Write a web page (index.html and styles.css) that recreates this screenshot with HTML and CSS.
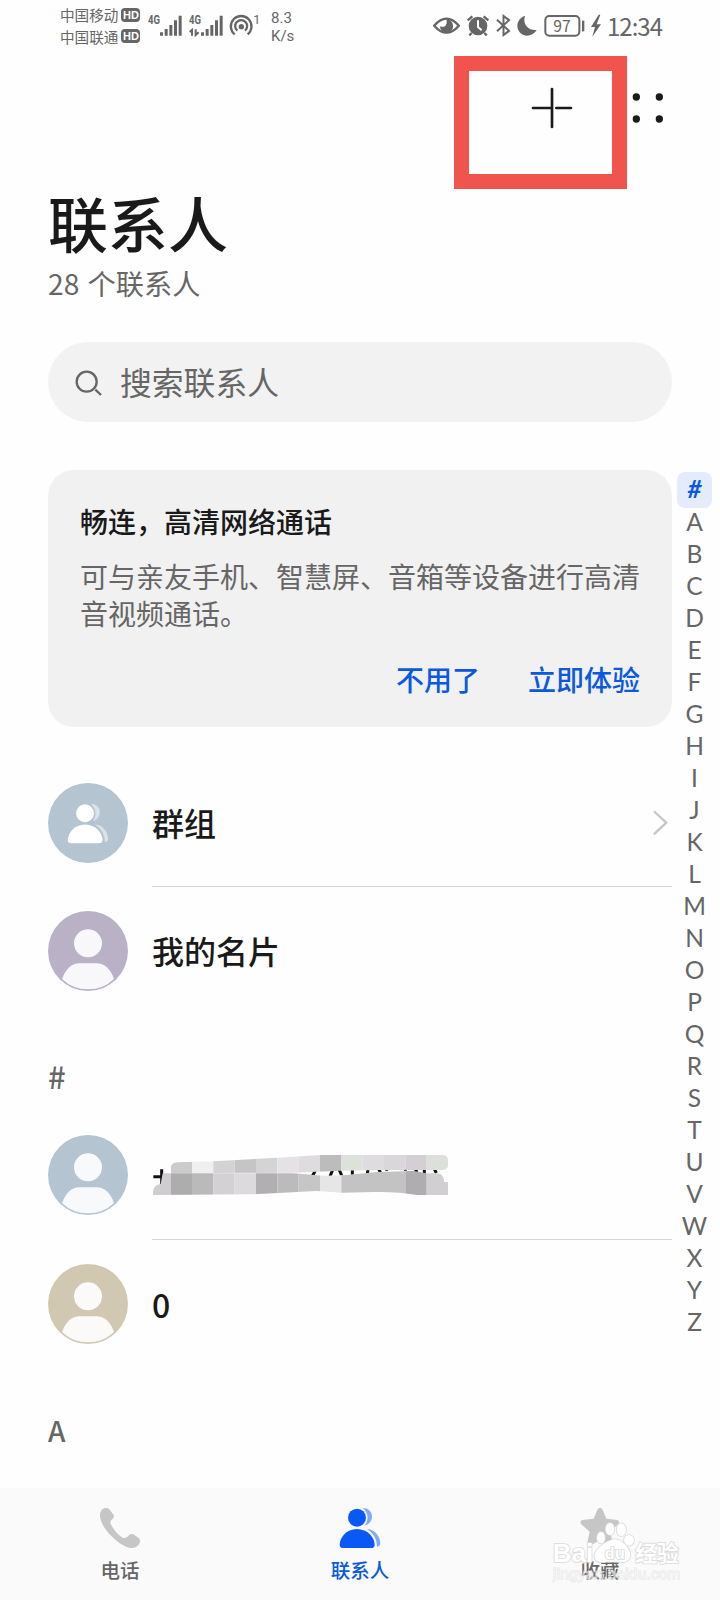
FILE: index.html
```html
<!DOCTYPE html>
<html lang="zh-CN">
<head>
    <meta charset="UTF-8">
    <meta name="viewport" content="width=device-width, initial-scale=1.0">
    <title>联系人</title>
    <link rel="stylesheet" href="styles.css">
</head>
<body>
    <!-- shared avatar shape -->
    <svg class="defs" width="0" height="0">
        <symbol id="person" viewBox="24 422 240 240">
            <circle cx="144" cy="519" r="42"/>
            <path d="M66 626 Q84 579 118 579 H170 Q205 579 222 626 Q190 657 144 657 Q98 657 66 626Z"/>
        </symbol>
        <symbol id="people" viewBox="838 112 126 124">
            <path opacity=".5" d="M909 114 C945 114 945 160 916 166 C928 148 926 128 909 114Z"/>
            <path opacity=".5" d="M922 177 C950 179 962 204 962 220 Q962 230 952 230 Q952 195 922 177Z"/>
            <circle cx="892" cy="143" r="27"/>
            <path d="M892 177 C924 177 945 203 945 224 Q945 234 934 234 H851 Q840 234 840 224 C840 203 860 177 892 177Z"/>
        </symbol>
    </svg>

    <div class="status">
        <div class="carriers">
            <div>中国移动<b>HD</b></div>
            <div>中国联通<b>HD</b></div>
        </div>
        <svg class="sig1" width="35" height="25" viewBox="294 40 105 75">
            <text class="net" x="294" y="73" textLength="36" lengthAdjust="spacingAndGlyphs">4G</text>
            <path d="M330 98h9v10h-9zM344 88h9v20h-9zM358 76h9v32h-9zM372 62h9v46h-9zM386 48h9v60h-9z"/>
        </svg>
        <svg class="sig2" width="35" height="25" viewBox="416 40 105 75">
            <text class="net" x="416" y="73" textLength="36" lengthAdjust="spacingAndGlyphs">4G</text>
            <path d="M452 98h9v10h-9zM466 88h9v20h-9zM480 76h9v32h-9zM494 62h9v46h-9zM508 48h9v60h-9z"/>
            <path d="M425 108V91l-7 6M436 89v17l9-8" fill="none" stroke="#666" stroke-width="6"/>
        </svg>
        <svg class="hotspot" width="33" height="25" viewBox="538 40 99 75">
            <g fill="none" stroke="#666" stroke-width="7">
                <path d="M555 104A31 31 0 1 1 594 104"/>
                <path d="M563 93A18 18 0 1 1 586 93"/>
            </g>
            <circle cx="575" cy="81" r="8"/>
            <text class="one" x="611" y="74">1</text>
        </svg>
        <div class="speed">8.3<br>K/s</div>

        <div class="status-right">
            <svg width="27" height="25" viewBox="38 40 80 75">
                <path d="M41 78Q78 36 115 78Q78 120 41 78Z" fill="none" stroke="#666" stroke-width="7"/>
                <path d="M78 59A20 20 0 1 1 58 80Q68 84 75 78Q81 70 78 59Z"/>
            </svg>
            <svg width="24" height="25" viewBox="137 40 70 75">
                <circle cx="172" cy="79" r="28"/>
                <path d="M141 62l14-12M203 62l-14-12M153 100l-7 7M191 100l7 7" stroke="#666" stroke-width="7"/>
                <path d="M172 62v20l11 10" fill="none" stroke="#fff" stroke-width="6"/>
            </svg>
            <svg width="15" height="25" viewBox="226 40 46 75">
                <path d="M229 60L266 94L249 107V48L266 61L229 95" fill="none" stroke="#666" stroke-width="6"/>
            </svg>
            <svg width="20" height="25" viewBox="292 40 60 75">
                <path d="M316 48C308 74 325 94 351 91C338 113 306 114 296 92C288 73 297 55 316 48Z"/>
            </svg>
            <svg class="battery" width="41" height="25" viewBox="373 40 123 75">
                <rect x="377" y="49" width="102" height="59" rx="12" fill="none" stroke="#666" stroke-width="6"/>
                <path d="M487 63h7v32h-7z"/>
                <text x="427" y="96" text-anchor="middle">97</text>
            </svg>
            <svg width="10" height="25" viewBox="511 40 30 75">
                <path d="M534 45L511 82H523L515 111L541 74H528L539 45Z"/>
            </svg>
            <div class="time">12:34</div>
        </div>
    </div>

    <div class="toolbar">
        <svg class="plus" width="42" height="42" viewBox="273 141 126 126">
            <path d="M336 147v114M279 204h57M349 204h44" stroke="#1a1a1a" stroke-width="8" stroke-linecap="round"/>
        </svg>
        <svg class="dots" width="32" height="32" viewBox="576 154 96 96">
            <circle cx="589" cy="169" r="11"/><circle cx="658" cy="169" r="11"/>
            <circle cx="589" cy="235" r="11"/><circle cx="658" cy="235" r="11"/>
        </svg>
        <div class="highlight"></div>
    </div>

    <div class="header">
        <h1>联系人</h1>
        <p>28 个联系人</p>
        <div class="search">
            <svg width="28" height="28" viewBox="135 566 84 84">
                <circle cx="170" cy="601" r="30"/>
                <path d="M196 625l17 16"/>
            </svg>
            <span>搜索联系人</span>
        </div>
    </div>

    <div class="main">
        <div class="content">
            <div class="card">
                <h2>畅连，高清网络通话</h2>
                <p>可与亲友手机、智慧屏、音箱等设备进行高清音视频通话。</p>
                <div class="actions"><a>不用了</a><a>立即体验</a></div>
            </div>

            <div class="row first">
                <div class="avatar blue"><svg class="group" width="42" height="41"><use href="#people"/></svg></div>
                <div class="name line">群组
                    <svg class="arrow" width="16" height="26" viewBox="160 104 48 78"><path d="M165 110l35 32l-35 33"/></svg>
                </div>
            </div>
            <div class="row">
                <div class="avatar purple"><svg width="80" height="80"><use href="#person"/></svg></div>
                <div class="name">我的名片</div>
            </div>

            <div class="letter hash">#</div>
            <div class="row masked">
                <div class="avatar blue"><svg width="80" height="80"><use href="#person"/></svg></div>
                <div class="name line">
                    <svg class="mosaic" width="296" height="42" viewBox="336 312 888 126">
                        <clipPath id="top"><path d="M392 370V356Q392 338 412 337L520 334L712 323L840 315H1208Q1224 315 1224 330V346Q1224 360 1206 360H1010L900 362L760 368Z"/></clipPath>
                        <clipPath id="bottom"><path d="M339 435V425Q341 404 362 402L368 370H760L850 377L920 375L1010 366L1120 363L1160 370H1194Q1212 374 1212 396H1224V435H1130Q1070 424 1000 426L910 428L830 423L640 433Z"/></clipPath>
                        <path class="marks" d="M340 380h28M365 358v44M826 362l-9 16M877 362l-7 17M897 358l8 18M937 360v14M984 360l-2 10M1016 359l6 8M1040 357v5M1096 357v5M1126 358l5 8M1153 359v10M1183 357l6 12"/>
                        <g clip-path="url(#top)">
                            <rect x="392" y="312" width="64" height="64" fill="#cbcbcb"/>
                            <rect x="456" y="312" width="64" height="64" fill="#efefef"/>
                            <rect x="520" y="312" width="64" height="64" fill="#d4d3d4"/>
                            <rect x="584" y="312" width="64" height="64" fill="#c5c5c5"/>
                            <rect x="648" y="312" width="64" height="64" fill="#d5d4d5"/>
                            <rect x="712" y="312" width="64" height="64" fill="#e5e1e5"/>
                            <rect x="776" y="312" width="64" height="64" fill="#dedcde"/>
                            <rect x="840" y="312" width="64" height="64" fill="#bdbcbd"/>
                            <rect x="904" y="312" width="64" height="64" fill="#dce2da"/>
                            <rect x="968" y="312" width="64" height="64" fill="#dedcde"/>
                            <rect x="1032" y="312" width="64" height="64" fill="#dad7da"/>
                            <rect x="1096" y="312" width="64" height="64" fill="#d3cfd4"/>
                            <rect x="1160" y="312" width="64" height="64" fill="#dbe1d9"/>
                        </g>
                        <g clip-path="url(#bottom)">
                            <rect x="336" y="360" width="56" height="78" fill="#cfcdcf"/>
                            <rect x="392" y="360" width="64" height="78" fill="#aeadae"/>
                            <rect x="456" y="360" width="64" height="78" fill="#bbbabb"/>
                            <rect x="520" y="360" width="64" height="78" fill="#d4d1d5"/>
                            <rect x="584" y="360" width="64" height="78" fill="#dddade"/>
                            <rect x="648" y="360" width="64" height="78" fill="#b2afb3"/>
                            <rect x="712" y="360" width="64" height="78" fill="#bcbbbc"/>
                            <rect x="776" y="360" width="64" height="78" fill="#c7c6c7"/>
                            <rect x="840" y="360" width="64" height="78" fill="#e6e6e6"/>
                            <rect x="904" y="360" width="192" height="78" fill="#c3c3c3"/>
                            <rect x="1096" y="360" width="64" height="78" fill="#b0adb1"/>
                            <rect x="1160" y="360" width="64" height="78" fill="#d2cfd3"/>
                        </g>
                    </svg>
                </div>
            </div>
            <div class="row">
                <div class="avatar sand"><svg width="80" height="80"><use href="#person"/></svg></div>
                <div class="name zero">0</div>
            </div>
            <div class="letter">A</div>
        </div>

        <div class="index">
            <span class="active">#</span>
            <span>A</span><span>B</span><span>C</span><span>D</span><span>E</span><span>F</span>
            <span>G</span><span>H</span><span>I</span><span>J</span><span>K</span><span>L</span>
            <span>M</span><span>N</span><span>O</span><span>P</span><span>Q</span><span>R</span>
            <span>S</span><span>T</span><span>U</span><span>V</span><span>W</span><span>X</span>
            <span>Y</span><span>Z</span>
        </div>
    </div>

    <div class="tabs">
        <div class="tab">
            <svg width="42" height="42" viewBox="117 111 126 126">
                <path d="M120 136C120 116 137 109 148 118Q155 127 161 135Q164 142 157 148Q149 152 152 162Q166 190 188 203Q198 207 204 199Q210 190 220 193L236 204Q243 210 238 221Q225 240 200 231C165 216 120 170 120 136Z"/>
            </svg>
            <span>电话</span>
        </div>
        <div class="tab on">
            <svg width="42" height="42"><use href="#people"/></svg>
            <span>联系人</span>
        </div>
        <div class="tab">
            <svg width="42" height="42" viewBox="147 84 126 126">
                <path d="M203 91Q210 82 217 91L229 119L262 123Q271 127 265 135L241 158L248 192Q247 202 237 199L210 183L183 199Q173 202 172 192L179 158L153 135Q148 126 157 123L191 119Z"/>
            </svg>
            <span>收藏</span>
        </div>
    </div>

    <div class="watermark">
        <svg width="150" height="80" viewBox="60 120 450 240">
            <text class="logo" x="68" y="246" textLength="122" lengthAdjust="spacingAndGlyphs">Bai</text>
            <g class="paw">
                <ellipse cx="213" cy="173" rx="12" ry="17"/>
                <ellipse cx="240" cy="147" rx="13" ry="18"/>
                <ellipse cx="274" cy="149" rx="14" ry="19"/>
                <ellipse cx="297" cy="181" rx="15" ry="16"/>
                <path d="M256 178C275 178 300 205 301 225C301 243 285 249 269 245H230C205 251 188 241 195 220C201 203 237 178 256 178Z"/>
            </g>
            <text class="du" x="224" y="236" textLength="60">du</text>
            <text class="cn" x="316" y="242" textLength="130">经验</text>
            <text class="url" x="69" y="298" textLength="382">jingyan.baidu.com</text>
        </svg>
    </div>
</body>
</html>
```

FILE: styles.css
```css
* {
    box-sizing: border-box;
}
body {
    margin: 0;
    width: 720px;
    height: 1600px;
    position: relative;
    display: flex;
    flex-direction: column;
    overflow: hidden;
    background: #fefefe;
    color: #1a1a1a;
    font-family: "Noto Sans CJK SC", sans-serif;
}
h1, h2, p {
    margin: 0;
}
svg {
    display: block;
    flex: none;
}
.defs {
    position: absolute;
}

/* status bar */
.status {
    height: 56px;
    padding: 4px 59px 0 60px;
    display: flex;
    align-items: flex-start;
    color: #666;
    fill: #666;
}
.carriers {
    width: 88px;
    font-size: 14.6px;
    line-height: 21.5px;
}
.carriers div {
    display: flex;
    align-items: center;
}
.carriers b {
    width: 19px;
    height: 14px;
    margin-left: 3px;
    border-radius: 4px;
    background: #666;
    color: #fff;
    font: bold 11px/14px "Liberation Sans", sans-serif;
    text-align: center;
}
.sig1, .sig2, .hotspot {
    margin-top: 9px;
}
.sig2 {
    margin-left: 6px;
}
.hotspot {
    margin-left: 5px;
}
.net {
    font: bold 36px Roboto, sans-serif;
}
.one {
    font: 38px Roboto, sans-serif;
}
.speed {
    margin: 5px 0 0 9px;
    font: 15px/18px Roboto, sans-serif;
}
.status-right {
    margin: 9px 0 0 auto;
    display: flex;
    align-items: center;
    gap: 6px;
}
.battery {
    margin-left: 1px;
}
.battery text {
    font: 47px "Noto Sans CJK SC", sans-serif;
}
.time {
    font: 24px/25px "Noto Sans CJK SC", sans-serif;
    width: 54px;
    letter-spacing: -1px;
    white-space: nowrap;
}

/* top buttons */
.toolbar {
    position: relative;
    height: 134px;
    padding: 31px 56px 0 0;
    display: flex;
    justify-content: flex-end;
}
.plus {
    margin-right: 59px;
}
.dots {
    margin-top: 5px;
    fill: #1a1a1a;
}
.highlight {
    position: absolute;
    left: 454px;
    top: 0;
    width: 173px;
    height: 133px;
    border: 15px solid #f0544c;
}

.header {
    height: 280px;
    padding: 0 48px;
}
h1 {
    height: 68px;
    font-size: 60px;
    font-weight: 500;
    line-height: 63px;
}
.header p {
    color: #666;
    font-size: 28.2px;
    line-height: 36px;
    margin-top: 7px;
    word-spacing: 2px;
}
.search {
    height: 80px;
    margin-top: 41px;
    border-radius: 40px;
    padding-left: 27px;
    display: flex;
    align-items: center;
    gap: 17px;
    background: #f2f2f2;
    color: #666;
    font-size: 31.8px;
}
.search svg {
    margin-top: 3px;
    fill: none;
    stroke: #666;
    stroke-width: 7;
}
.search span {
    margin-top: -2px;
}

.main {
    height: 1018px;
    display: flex;
}
.content {
    width: 624px;
    margin-left: 48px;
}
.card {
    height: 257px;
    padding: 32px 32px 0;
    border-radius: 26px;
    background: #f1f1f1;
    font-size: 28px;
}
.card h2 {
    font-size: 28px;
    font-weight: 500;
    line-height: 39px;
}
.card p {
    color: #666;
    line-height: 37px;
    margin: 17px -4px 0 0;
}
.actions {
    display: flex;
    justify-content: flex-end;
    gap: 48px;
    margin-top: 27px;
    line-height: 40px;
    font-weight: 500;
    color: #0a59e0;
}

/* contact rows */
.row {
    height: 128px;
    padding-top: 24px;
    display: flex;
}
.first {
    height: 160px;
    padding-top: 56px;
}
.avatar {
    width: 80px;
    height: 80px;
    border-radius: 50%;
    flex: none;
}
.avatar svg {
    fill: rgba(255, 255, 255, 0.9);
}
.avatar .group {
    margin: 20px 0 0 19px;
    fill: #fff;
}
.blue {
    background: #b5c4d1;
}
.purple {
    background: #bab1c7;
}
.sand {
    background: #d1c8b2;
}
.name {
    flex: 1;
    margin-left: 24px;
    height: 104px;
    padding-bottom: 26px;
    display: flex;
    align-items: center;
    font-size: 32px;
    font-weight: 500;
}
.line {
    border-bottom: 1px solid #d5d5d5;
    padding-bottom: 25px;
}
.zero {
    padding-bottom: 24px;
}
.masked {
    height: 129px;
}
.masked .name {
    height: 105px;
    padding-bottom: 24px;
}
.arrow {
    margin: 1px 3px 0 auto;
    fill: none;
    stroke: #c6c6c6;
    stroke-width: 7;
    stroke-linecap: round;
    stroke-linejoin: round;
}
.marks {
    stroke: #111;
    stroke-width: 9;
}
.letter {
    height: 95px;
    padding-top: 42px;
    font-size: 28px;
    font-weight: 500;
    line-height: 40px;
    color: #666;
}
.hash {
    height: 96px;
    padding-top: 41px;
    font-size: 31px;
}

.index {
    width: 35px;
    margin: 2px 0 0 5px;
    text-align: center;
    color: #666;
    font: 24.5px/32px Lato, sans-serif;
}
.index span {
    display: block;
    height: 32px;
}
.index .active {
    height: 36px;
    margin-bottom: -2px;
    padding-top: 1px;
    border-radius: 8px;
    background: #e4ebfa;
    color: #0a59e0;
    font-weight: bold;
    font-style: italic;
}

/* bottom tabs */
.tabs {
    height: 112px;
    display: flex;
    background: #fafafa;
}
.tab {
    flex: 1;
    padding-top: 19px;
    display: flex;
    flex-direction: column;
    align-items: center;
    fill: #c6c6c6;
    color: #666;
    font-size: 19.5px;
    font-weight: 500;
    line-height: 30px;
}
.tab span {
    margin-top: 6px;
}
.on {
    fill: #0a59f7;
    color: #0a59e0;
}

.watermark {
    position: absolute;
    left: 550px;
    top: 1520px;
}
.watermark text, .paw {
    fill: #fff;
    stroke: #dadada;
    stroke-width: 5;
    paint-order: stroke;
}
.watermark .logo {
    font: bold 78px "Liberation Sans", sans-serif;
}
.watermark .du {
    font: bold 48px "Liberation Sans", sans-serif;
}
.watermark .cn {
    font: bold 66px "Noto Sans CJK SC", sans-serif;
}
.watermark .url {
    font: 46px "Liberation Sans", sans-serif;
    fill-opacity: 0.5;
    stroke-opacity: 0.5;
    stroke-width: 4;
}
```
